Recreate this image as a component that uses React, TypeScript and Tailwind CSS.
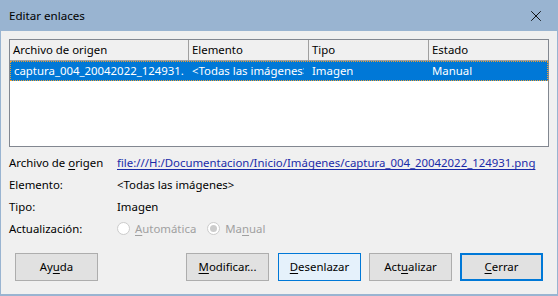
import { X } from "lucide-react"

const font = { fontFamily: "'Noto Sans', 'Open Sans', sans-serif" }

function Btn({
  label,
  u,
  variant = "normal",
  className = "",
}: {
  label: string
  u: number
  variant?: "normal" | "hover" | "default"
  className?: string
}) {
  const base = "h-[28px] flex items-center justify-center text-[11.4px] text-black"
  const styles =
    variant === "hover"
      ? "bg-[#e5f1fb] border border-[#0078d7]"
      : variant === "default"
        ? "bg-[#e1e1e1] border-2 border-[#0078d7]"
        : "bg-[#e1e1e1] border border-[#adadad]"
  return (
    <button className={`${base} ${styles} ${className}`}>
      {label.slice(0, u)}
      <span className="underline underline-offset-2">{label[u]}</span>
      {label.slice(u + 1)}
    </button>
  )
}

function Radio({ checked, label, u }: { checked?: boolean; label: string; u: number }) {
  return (
    <div className="flex items-center gap-[5px] text-[#a0a0a0]">
      <span className="w-[13px] h-[13px] rounded-full border border-[#cccccc] bg-white flex items-center justify-center">
        {checked && <span className="w-[7px] h-[7px] rounded-full bg-[#cccccc]" />}
      </span>
      <span>
        {label.slice(0, u)}
        <span className="underline underline-offset-2">{label[u]}</span>
        {label.slice(u + 1)}
      </span>
    </div>
  )
}

function Cell({ w, children }: { w: string; children: React.ReactNode }) {
  return (
    <div className={`${w} pl-[3px] pr-[5px] flex items-center`}>
      <span className="overflow-hidden whitespace-nowrap">{children}</span>
    </div>
  )
}

export default function App() {
  return (
    <div className="w-[558px] h-[296px] bg-[#99b4d1] flex flex-col px-px pb-[2px]" style={font}>
      <div className="h-[31px] flex items-center justify-between pl-[8px] pr-[12px] text-[11.6px] text-black">
        <span>Editar enlaces</span>
        <X className="w-[18px] h-[18px] text-black" strokeWidth={1.2} />
      </div>
      <div className="flex-1 bg-[#f0f0f0] flex flex-col px-[8px] pt-[8px] text-[11.4px] text-black">
        <div className="h-[108px] border border-[#828790] bg-white flex flex-col">
          <div className="h-[21px] flex bg-[#f0f0f0] border-b border-[#a0a0a0]">
            <div className="w-[179px] border-r border-[#a0a0a0] pl-[3px] flex items-center">Archivo de origen</div>
            <div className="w-[120px] border-r border-[#a0a0a0] pl-[3px] flex items-center">Elemento</div>
            <div className="w-[120px] border-r border-[#a0a0a0] pl-[3px] flex items-center">Tipo</div>
            <div className="flex-1 pl-[3px] flex items-center">Estado</div>
          </div>
          <div className="h-[20px] flex bg-[#0078d7] text-white border border-dotted border-[#f0a030]">
            <Cell w="w-[178px]">captura_004_20042022_124931.png</Cell>
            <Cell w="w-[120px]">&lt;Todas las imágenes&gt;</Cell>
            <Cell w="w-[120px]">Imagen</Cell>
            <Cell w="flex-1">Manual</Cell>
          </div>
        </div>
        <div className="mt-[5px] grid grid-cols-[108px_1fr] auto-rows-[22px] items-center">
          <span>
            Archivo de <span className="underline underline-offset-2">o</span>rigen
          </span>
          <span className="text-[#1a2ba8] underline underline-offset-2 whitespace-nowrap">
            file:///H:/Documentacion/Inicio/Imágenes/captura_004_20042022_124931.png
          </span>
          <span>Elemento:</span>
          <span>&lt;Todas las imágenes&gt;</span>
          <span>Tipo:</span>
          <span>Imagen</span>
          <span>Actualización:</span>
          <div className="flex items-center gap-[11px]">
            <Radio label="Automática" u={0} />
            <Radio label="Manual" u={2} checked />
          </div>
        </div>
        <div className="mt-[13px] flex items-center px-[6px]">
          <Btn label="Ayuda" u={2} className="w-[83px]" />
          <div className="flex-1" />
          <Btn label="Modificar..." u={0} className="w-[83px]" />
          <Btn label="Desenlazar" u={0} variant="hover" className="w-[83px] ml-[9px]" />
          <Btn label="Actualizar" u={3} className="w-[83px] ml-[8px]" />
          <Btn label="Cerrar" u={0} variant="default" className="w-[83px] ml-[8px]" />
        </div>
      </div>
    </div>
  )
}
